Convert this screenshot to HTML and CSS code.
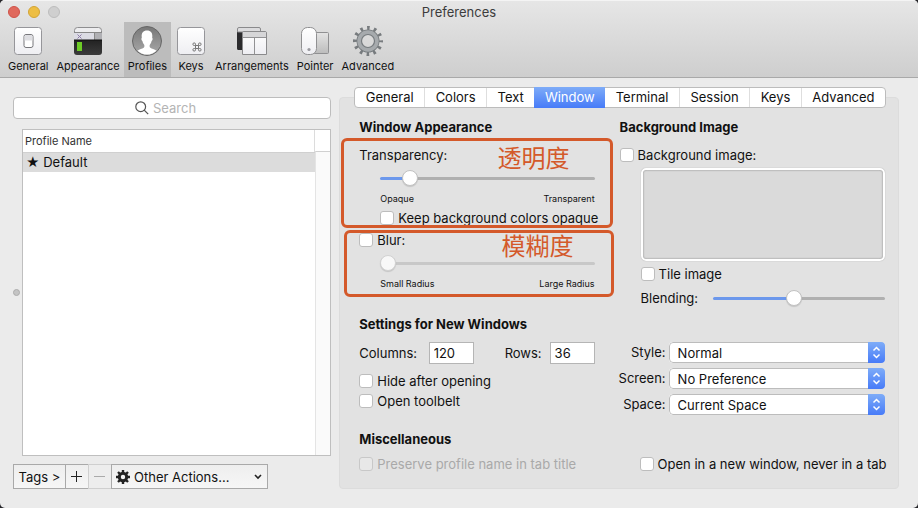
FILE: index.html
```html
<!DOCTYPE html>
<html lang="en">
<head>
<meta charset="utf-8">
<meta name="viewport" content="width=device-width, initial-scale=1">
<title>Preferences</title>
<link rel="stylesheet" href="styles.css">
</head>
<body>
<div class="window">
  <header class="titlebar">
    <div class="title-row">
      <div class="lights">
        <button class="light close" aria-label="Close"></button>
        <button class="light minimize" aria-label="Minimize"></button>
        <button class="light" aria-label="Zoom" disabled></button>
      </div>
      <h1 class="title">Preferences</h1>
    </div>
    <nav class="toolbar">
      <button class="tool">
        <svg width="32" height="32" viewBox="0 0 32 32">
          <defs>
            <linearGradient id="key" x1="0" y1="0" x2="0" y2="1"><stop offset="0" stop-color="#fff"/><stop offset="1" stop-color="#eeeef2"/></linearGradient>
            <linearGradient id="disc" x1="0" y1="0" x2="0" y2="1"><stop offset="0" stop-color="#777"/><stop offset="1" stop-color="#aaa"/></linearGradient>
            <linearGradient id="term" x1="0" y1="0" x2="0" y2="1"><stop offset="0" stop-color="#222"/><stop offset="1" stop-color="#3c3c3c"/></linearGradient>
            <linearGradient id="pad" x1="0" y1="0" x2="0" y2="1"><stop offset="0" stop-color="#e4e4e4"/><stop offset="1" stop-color="#bcbcbc"/></linearGradient>
          </defs>
          <rect x="2.500" y="2.500" width="27" height="27" rx="3" fill="url(#key)" stroke="#96969a"/>
          <rect x="12" y="9.500" width="9" height="13" rx="2" fill="#fff" stroke="#77777b"/>
          <path d="M12.500 15.500h8v-4a1.500 1.500 0 0 0-1.500-1.500h-5a1.500 1.500 0 0 0-1.500 1.500z" fill="#dedee2"/>
        </svg>
        <span>General</span>
      </button>
      <button class="tool">
        <svg width="32" height="32" viewBox="0 0 32 32">
          <path d="M2.500 8V5.500a3 3 0 0 1 3-3h21a3 3 0 0 1 3 3V8z" fill="#ededef" stroke="#8e8e90"/>
          <path d="M2 8h20v7H2z" fill="#dcdce4"/><path d="M22 8h8v7h-8z" fill="#b0b0b4"/>
          <path d="M2 7.500h28M22.500 8v7" stroke="#888" fill="none"/>
          <path d="M5.500 9.500l4 4m0-4l-4 4" stroke="#8d7ba8" fill="none"/>
          <path d="M2 15h28v12a3 3 0 0 1-3 3H5a3 3 0 0 1-3-3z" fill="url(#term)"/>
          <path d="M2 15h28" stroke="#111"/>
          <rect x="5" y="17" width="5" height="9" fill="#6dcc26"/>
        </svg>
        <span>Appearance</span>
      </button>
      <button class="tool active" aria-pressed="true">
        <svg width="32" height="32" viewBox="0 0 32 32">
          <circle cx="16" cy="16" r="14.500" fill="url(#disc)" stroke="#666"/>
          <path d="M16 5.500c-3.800 0-5.600 2.600-5.300 6 .1 1 .2 1.300-.2 1.800-.3.700.1 2.400.9 2.800.4 1.800 1 2.900 1.900 3.900.2 1.400.1 2.200-.6 2.800-1.500 1-4.200 1.500-6.200 2.900 2.400 2.400 5.800 3.900 9.500 3.900s7.100-1.500 9.500-3.900c-2-1.400-4.700-1.900-6.200-2.900-.7-.6-.8-1.400-.6-2.800.9-1 1.500-2.100 1.900-3.900.8-.4 1.200-2.100.9-2.800-.4-.5-.3-.8-.2-1.800.3-3.400-1.500-6-5.300-6z" fill="#fff"/>
        </svg>
        <span>Profiles</span>
      </button>
      <button class="tool">
        <svg width="32" height="32" viewBox="0 0 32 32">
          <rect x="2.500" y="2.500" width="27" height="27" rx="3" fill="url(#key)" stroke="#96969a"/>
          <path d="M20.500 20.500h3v3h-3zM20.500 20.500h-1.200a1.300 1.300 0 1 1 1.200-1.300zM23.500 20.500v-1.300a1.300 1.300 0 1 1 1.200 1.300zM23.500 23.500h1.200a1.300 1.300 0 1 1-1.200 1.300zM20.500 23.500v1.300a1.300 1.300 0 1 1-1.200-1.300z" fill="none" stroke="#777"/>
        </svg>
        <span>Keys</span>
      </button>
      <button class="tool">
        <svg width="32" height="32" viewBox="0 0 32 32">
          <path d="M1 7h8v18H2.500A1.500 1.500 0 0 1 1 23.500z" fill="#2b2b2d"/>
          <path d="M1.500 7V4a1.500 1.500 0 0 1 1.500-1.500h20A1.500 1.500 0 0 1 24.500 4v3z" fill="#dcdcde" stroke="#8a8a8c"/>
          <path d="M6.500 8A1.500 1.500 0 0 1 8 6.500h21A1.500 1.500 0 0 1 30.500 8v21.500h-24z" fill="url(#key)" stroke="#8a8a8c"/>
          <path d="M7 8a1 1 0 0 1 1-1h21a1 1 0 0 1 1 1v4H7z" fill="#d6d6d8"/>
          <path d="M7 12.500h23M18.500 12.500v17" stroke="#929294"/>
        </svg>
        <span>Arrangements</span>
      </button>
      <button class="tool">
        <svg width="32" height="32" viewBox="0 0 32 32">
          <rect x="14.500" y="7.500" width="15" height="21" rx="1" fill="url(#pad)" stroke="#909092"/>
          <rect x="2.500" y="2.500" width="15" height="27" rx="6" fill="url(#key)" stroke="#909092"/>
          <circle cx="10" cy="24.500" r="1.600" fill="#9a9aa0"/>
        </svg>
        <span>Pointer</span>
      </button>
      <button class="tool">
        <svg width="32" height="32" viewBox="0 0 32 32">
          <circle cx="16" cy="16" r="13" fill="none" stroke="#777b7e" stroke-width="4" stroke-dasharray="2.600 4.207" stroke-dashoffset="1.300"/>
          <circle cx="16" cy="16" r="8.700" fill="none" stroke="#777c7f" stroke-width="5.600"/>
          <circle cx="16" cy="16" r="8.900" fill="none" stroke="#a6aaad" stroke-width="3.600"/>
        </svg>
        <span>Advanced</span>
      </button>
    </nav>
  </header>

  <main class="content">
    <section class="sidebar">
      <div class="search">
        <svg width="14" height="14" viewBox="0 0 14 14" fill="none" stroke="#555" stroke-width="1.200"><circle cx="5.700" cy="5.700" r="4.900"/><path d="M9.200 9.200l4 4"/></svg>
        <input type="search" placeholder="Search" aria-label="Search">
      </div>
      <div class="list-area">
        <span class="grip"></span>
        <div class="profile-list">
          <table>
            <thead><tr><th scope="col">Profile Name</th></tr></thead>
            <tbody><tr><td>★ Default</td></tr></tbody>
          </table>
          <div class="scroll-track"></div>
        </div>
      </div>
      <div class="actions">
        <button class="tags">Tags &gt;</button>
        <button class="square" aria-label="Add profile"><svg width="12" height="12" viewBox="0 0 12 12"><path d="M0 5.500h11M5.500 0v11" stroke="#222"/></svg></button>
        <button class="square" aria-label="Remove profile" disabled><svg width="12" height="12" viewBox="0 0 12 12"><path d="M0 5.500h11" stroke="#aaa"/></svg></button>
        <div class="other">
          <svg class="gear" width="14" height="14" viewBox="0 0 14 14"><circle cx="7" cy="7" r="3.700" fill="none" stroke="#222" stroke-width="3"/><path d="M7 0v3M7 11v3M0 7h3M11 7h3M2 2l2 2M10 10l2 2M12 2l-2 2M4 10l-2 2" stroke="#222" stroke-width="2.400"/></svg>
          <select aria-label="Other Actions"><option>Other Actions...</option></select>
          <svg class="chevron" width="8" height="6" viewBox="0 0 8 6"><path d="M1 1l3 3 3-3" fill="none" stroke="#222" stroke-width="1.600"/></svg>
        </div>
      </div>
    </section>

    <section class="panel">
      <div class="tabs" role="tablist">
        <button role="tab">General</button>
        <button role="tab">Colors</button>
        <button role="tab">Text</button>
        <button role="tab" aria-selected="true">Window</button>
        <button role="tab">Terminal</button>
        <button role="tab">Session</button>
        <button role="tab">Keys</button>
        <button role="tab">Advanced</button>
      </div>

      <div class="groups">
        <div class="group">
          <h2>Window Appearance</h2>
          <div class="marked">
            <label class="row" for="transparency">Transparency:</label>
            <div class="indent">
              <input type="range" id="transparency" value="11" style="--fill:13%">
              <div class="scale"><span>Opaque</span><span>Transparent</span></div>
              <label class="check"><input type="checkbox">Keep background colors opaque</label>
            </div>
            <div class="callout"><span lang="zh">透明度</span></div>
          </div>
          <div class="marked">
            <label class="check"><input type="checkbox">Blur:</label>
            <div class="indent">
              <input type="range" value="0" style="--fill:0%" aria-label="Blur radius" disabled>
              <div class="scale"><span>Small Radius</span><span>Large Radius</span></div>
            </div>
            <div class="callout low"><span lang="zh">模糊度</span></div>
          </div>
        </div>

        <div class="group">
          <h2>Background Image</h2>
          <label class="check"><input type="checkbox">Background image:</label>
          <div class="indent">
            <div class="well"></div>
            <label class="check"><input type="checkbox">Tile image</label>
            <div class="blending"><label for="blending">Blending:</label><input type="range" id="blending" value="47" style="--fill:47%"></div>
          </div>
        </div>

        <div class="group">
          <h2>Settings for New Windows</h2>
          <div class="size-row">
            <label for="columns">Columns:</label><input type="text" id="columns" value="120">
            <label for="rows">Rows:</label><input type="text" id="rows" value="36">
          </div>
          <label class="check"><input type="checkbox">Hide after opening</label>
          <label class="check"><input type="checkbox">Open toolbelt</label>
        </div>

        <div class="group popups">
          <label for="style">Style:</label>
          <div class="popup"><select id="style"><option>Normal</option></select><svg viewBox="0 0 17 21"><path d="M5.500 8.500l3-3 3 3M5.500 12.500l3 3 3-3"/></svg></div>
          <label for="screen">Screen:</label>
          <div class="popup"><select id="screen"><option>No Preference</option></select><svg viewBox="0 0 17 21"><path d="M5.500 8.500l3-3 3 3M5.500 12.500l3 3 3-3"/></svg></div>
          <label for="space">Space:</label>
          <div class="popup"><select id="space"><option>Current Space</option></select><svg viewBox="0 0 17 21"><path d="M5.500 8.500l3-3 3 3M5.500 12.500l3 3 3-3"/></svg></div>
        </div>

        <div class="group">
          <h2>Miscellaneous</h2>
          <label class="check off"><input type="checkbox" disabled>Preserve profile name in tab title</label>
        </div>

        <div class="group end">
          <label class="check"><input type="checkbox">Open in a new window, never in a tab</label>
        </div>
      </div>
    </section>
  </main>
</div>
</body>
</html>
```
FILE: styles.css
```css
* { box-sizing: border-box; }

html { background: #26262a; }

body {
  margin: 0;
  color: #111;
  font: 13px/20px Inter, "Liberation Sans", "Noto Sans CJK SC", sans-serif;
}

button, input, select {
  margin: 0;
  color: inherit;
  font: inherit;
}

button { padding: 0; border: 0; background: none; }
svg { display: block; flex: none; }

.window {
  display: flex;
  flex-direction: column;
  min-height: 100vh;
  border-radius: 5px;
  background: #ebebeb;
  overflow: hidden;
}

/* Title bar and toolbar */
.titlebar {
  border-top: 1px solid #f4f4f4;
  border-bottom: 1px solid #a9a9a9;
  background: linear-gradient(#e6e6e6, #cecece);
}

.title-row {
  display: grid;
  grid-template-columns: 1fr auto 1fr;
  align-items: center;
  height: 21px;
}

.lights { display: flex; gap: 8px; padding-left: 8px; }

.light {
  width: 12px;
  height: 12px;
  border: 1px solid #bdbdbd;
  border-radius: 50%;
  background: #cfcfcf;
}
.light.close { border-color: #cf5349; background: #e0695d; }
.light.minimize { border-color: #d3a435; background: #edbe43; }

.title { margin: 0; color: #3c3c3c; font-size: 13px; font-weight: 400; }

.toolbar { display: flex; padding-left: 4px; }

.tool {
  display: flex;
  flex-direction: column;
  align-items: center;
  gap: 1px;
  padding: 3px 4px 0;
  height: 55px;
  font-size: 11px;
  line-height: 16px;
}
.tool.active { background: #bcbcbc; }

/* Profile list */
.content {
  display: flex;
  flex: 1;
  gap: 8px;
  padding: 9px 19px 19px 13px;
}

.sidebar {
  display: flex;
  flex: 319 1 0;
  flex-direction: column;
  min-width: 0;
  padding-top: 10px;
}

.search {
  display: flex;
  align-items: center;
  gap: 4px;
  height: 22px;
  padding-left: 38%;
  border: 1px solid #bdbdbd;
  border-radius: 4px;
  background: #fff;
}
.search input {
  flex: 1;
  min-width: 0;
  padding: 0;
  border: 0;
  outline: 0;
  background: none;
  appearance: none;
}
.search input::placeholder { color: #b4b4b4; }

.list-area {
  display: flex;
  flex: 1;
  align-items: center;
  gap: 2px;
  margin: 10px 0 8px;
}

.grip {
  width: 7px;
  height: 7px;
  border: 1px solid #acacac;
  border-radius: 50%;
  background: #c4c4c4;
}

.profile-list {
  display: grid;
  flex: 1;
  grid-template-columns: 1fr 15px;
  align-self: stretch;
  align-items: start;
  border: 1px solid #bfbfbf;
  background: #fff;
}

table { width: 100%; border-collapse: collapse; }
th {
  height: 22px;
  padding: 0 2px;
  border-bottom: 1px solid #d0d0d0;
  border-right: 1px solid #dcdcdc;
  color: #333;
  font-size: 11px;
  font-weight: 400;
  text-align: left;
}
td { height: 20px; padding: 0 3px; background: #dcdcdc; line-height: 19px; }

.scroll-track {
  align-self: stretch;
  margin-top: 21px;
  border-top: 1px solid #d0d0d0;
  border-left: 1px solid #e4e4e4;
  background: #fafafa;
}

.actions { display: flex; height: 25px; }
.actions button, .other {
  border: 1px solid #a9a9a9;
  background: linear-gradient(#eee, #f6f6f6);
}
.actions button { display: flex; align-items: center; justify-content: center; }
.tags { width: 53px; }
.square { width: 24px; margin-left: -1px; }
.actions .square:disabled { border-color: #cfcfcf; background: #ededed; }

.other {
  position: relative;
  width: 157px;
  margin-left: -1px;
}
.other select {
  width: 100%;
  height: 23px;
  padding: 0 20px 0 22px;
  border: 0;
  background: none;
  appearance: none;
}
.gear, .chevron { position: absolute; pointer-events: none; }
.gear { top: 5px; left: 4px; }
.chevron { top: 9px; right: 5px; }

/* Settings panel */
.panel {
  flex: 559 1 0;
  min-width: 0;
  margin-top: 10px;
  border: 1px solid #dcdcdc;
  border-radius: 4px;
  background: #e2e2e2;
}

.tabs {
  display: flex;
  height: 21px;
  margin: -11px 12px 0 14px;
  border: 1px solid #bcbcbc;
  border-radius: 4px;
  background: #fff;
}
.tabs button {
  flex: 1 1 auto;
  border-left: 1px solid #dedede;
  line-height: 19px;
}
.tabs button:first-child { border-left: 0; }
.tabs [aria-selected="true"] {
  margin: -1px 0;
  border-left: 0;
  background: linear-gradient(#7eacf8, #477bf8);
  color: #fff;
}
.tabs [aria-selected="true"] + button { border-left: 0; }

.groups {
  display: grid;
  grid-template-columns: minmax(0, 235fr) minmax(0, 265fr);
  column-gap: 25px;
  padding: 9px 13px 12px 19px;
}

h2 { margin: 0 0 8px; font-size: 13px; font-weight: 700; line-height: 20px; }

.row { display: block; }
.indent { padding-left: 21px; }

.check {
  display: flex;
  align-items: center;
  gap: 4px;
  height: 20px;
  white-space: nowrap;
}
.check input {
  flex: none;
  width: 14px;
  height: 14px;
  border: 1px solid #bdbdbd;
  border-radius: 3px;
  background: #fff;
  appearance: none;
}
.check.off { color: #a9a9a9; }
.check.off input { border-color: #c8c8c8; background: #e8e8e8; }

input[type="range"] {
  display: block;
  width: 100%;
  height: 20px;
  background: none;
  appearance: none;
}
input[type="range"]::-webkit-slider-runnable-track {
  height: 3px;
  border-radius: 2px;
  background: linear-gradient(90deg, #6c98ec var(--fill), #b0b0b0 var(--fill));
}
input[type="range"]::-webkit-slider-thumb {
  width: 16px;
  height: 16px;
  margin-top: -7px;
  border: 1px solid #c2c2c2;
  border-radius: 50%;
  background: #fff;
  box-shadow: 0 1px 1px #0002;
  appearance: none;
}
input[type="range"]:disabled::-webkit-slider-runnable-track { background: #c8c8c8; }
input[type="range"]:disabled::-webkit-slider-thumb { border-color: #d2d2d2; background: #f8f8f8; }

.marked input[type="range"] { margin-top: 3px; }

.scale {
  display: flex;
  justify-content: space-between;
  margin: 2px 0 0;
  font-size: 9px;
  line-height: 18px;
}

/* Highlight drawn around a group of settings */
.marked { position: relative; margin-bottom: 2px; }
.callout {
  position: absolute;
  inset: -7px -18px 0;
  padding: 0 40px;
  border: 3px solid #d4592a;
  border-radius: 6px;
  color: #d4592a;
  font: 24px/32px "Noto Sans CJK SC", sans-serif;
  text-align: right;
  pointer-events: none;
}
.callout.low { inset: 0 -19px -4px -15px; padding: 0 37px; line-height: 24px; }

.well {
  height: 93px;
  margin: 3px 0;
  border: 2px solid #fff;
  border-radius: 5px;
  background: #dadada;
  box-shadow: 0 0 1px #999, inset 0 0 2px #777;
}

.blending { display: flex; gap: 15px; margin-top: 4px; }
.blending input { flex: 1; min-width: 0; }

.size-row {
  display: grid;
  grid-template-columns: 1fr 45px auto 45px;
  align-items: center;
  margin-bottom: 7px;
}
.size-row label:nth-of-type(2) { padding: 0 8px 0 31px; }
.size-row input {
  width: 100%;
  height: 22px;
  padding: 0 4px;
  border: 1px solid #b5b5b5;
  background: #fff;
}

.popups {
  display: grid;
  grid-template-columns: 46px 1fr;
  align-content: start;
  gap: 5px 3px;
  padding-top: 28px;
  text-align: right;
}
.popups label { display: flex; justify-content: flex-end; }
.popup {
  position: relative;
  border-radius: 4px;
  background: #fff;
  overflow: hidden;
}
.popup select {
  display: block;
  width: 100%;
  height: 21px;
  padding: 0 20px 0 8px;
  border: 1px solid #bcbcbc;
  border-radius: 4px;
  background: none;
  appearance: none;
}
.popup svg {
  position: absolute;
  top: 0;
  right: 0;
  width: 17px;
  height: 21px;
  background: linear-gradient(#7eacf8, #477bf8);
  fill: none;
  stroke: #fff;
  stroke-width: 1.500;
  pointer-events: none;
}

.group:nth-child(3), .group:nth-child(4) { margin-top: 6px; }
.group:nth-child(5), .group:nth-child(6) { margin-top: 14px; }
.group:nth-child(5) h2 { margin-bottom: 5px; }
.end { display: flex; align-items: flex-end; padding-left: 20px; }
```
